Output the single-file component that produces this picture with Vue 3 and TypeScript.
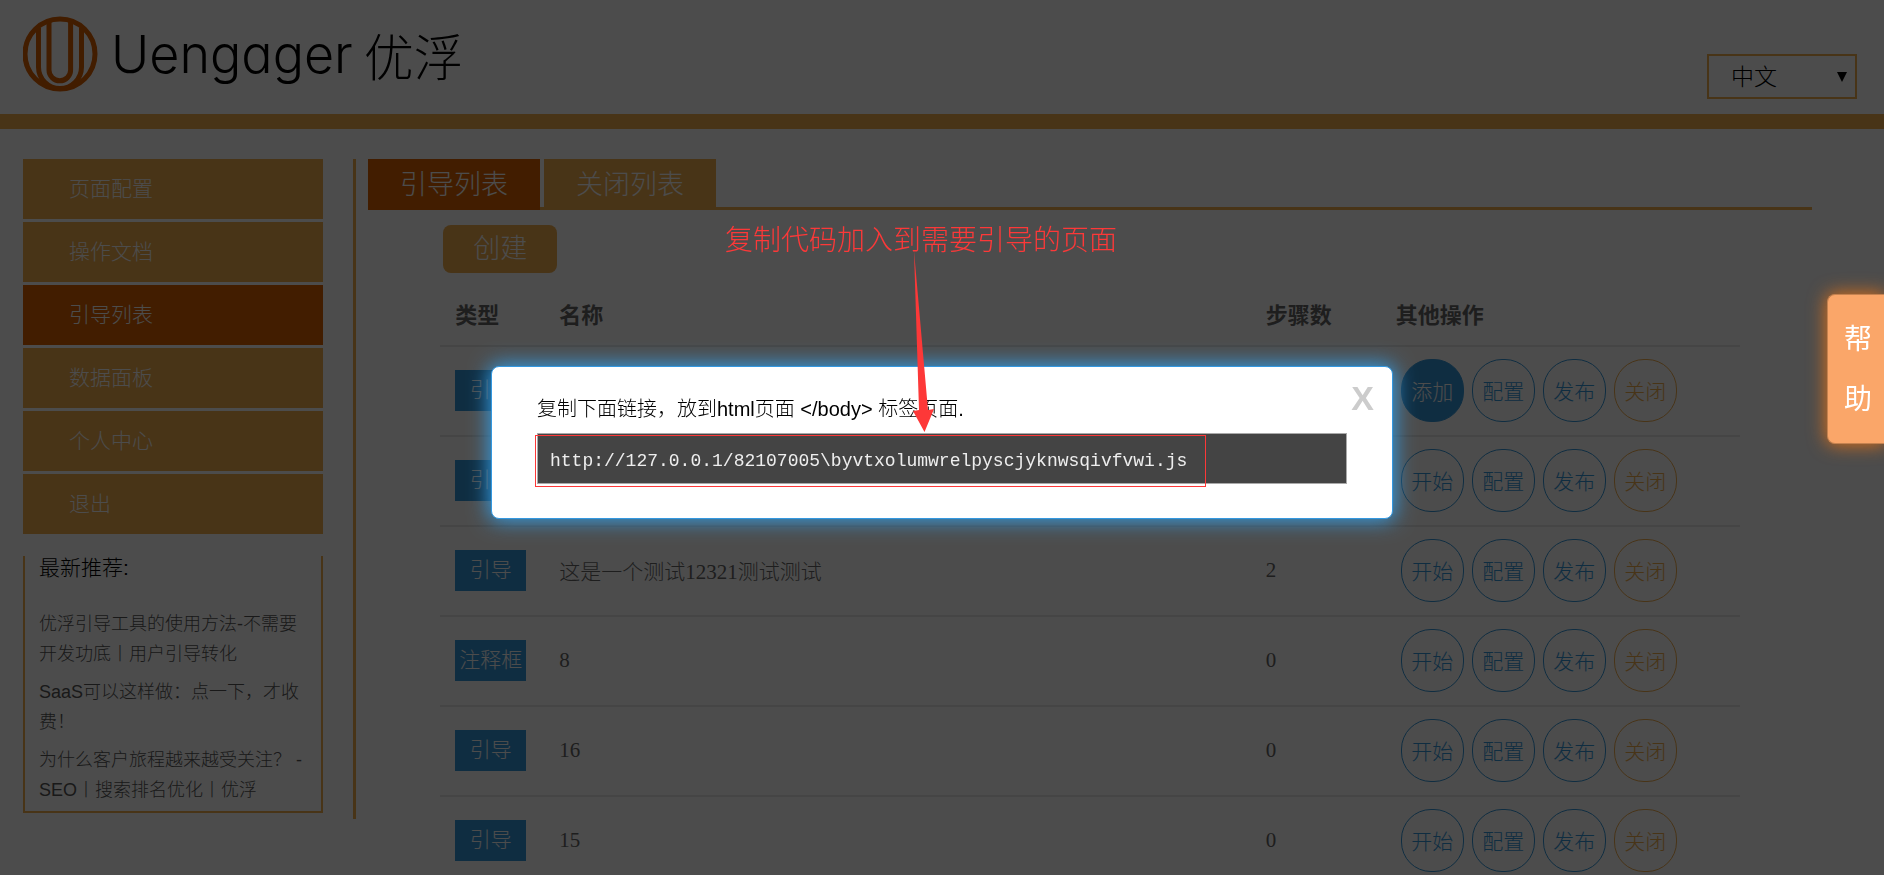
<script setup lang="ts">
import { ref } from 'vue'

interface GuideRow {
  type: string
  name: string
  steps: number
  started: boolean
}

const menu: string[] = ['页面配置', '操作文档', '引导列表', '数据面板', '个人中心', '退出']
const activeMenu = ref('引导列表')

const tabs: string[] = ['引导列表', '关闭列表']
const activeTab = ref('引导列表')

const articles: string[] = [
  '优浮引导工具的使用方法-不需要开发功底丨用户引导转化',
  'SaaS可以这样做：点一下，才收费！',
  '为什么客户旅程越来越受关注？ -SEO丨搜索排名优化丨优浮',
]

const rows: GuideRow[] = [
  { type: '引导', name: '', steps: 0, started: true },
  { type: '引导', name: '', steps: 0, started: false },
  { type: '引导', name: '这是一个测试12321测试测试', steps: 2, started: false },
  { type: '注释框', name: '8', steps: 0, started: false },
  { type: '引导', name: '16', steps: 0, started: false },
  { type: '引导', name: '15', steps: 0, started: false },
]

const language = ref('zh')
const dialogOpen = ref(true)
const snippet = ref('http://127.0.0.1/82107005\\byvtxolumwrelpyscjyknwsqivfvwi.js')
</script>

<template>
  <div class="page">
    <header class="header">
      <a class="logo" href="#" aria-label="Uengager 优浮">
        <svg class="mark" viewBox="1 0 76 76" aria-hidden="true">
          <circle cx="38" cy="38" r="35" />
          <path d="M16.5 12V51a21.5 21.5 0 0 0 43 0V12" />
          <path d="M27 6V54a10.800 10.800 0 0 0 21.600 0V6" />
        </svg>
        <span class="brand">Uengager</span>
        <span class="brand-cn">优浮</span>
      </a>
      <label class="language">
        <select v-model="language" aria-label="语言">
          <option value="zh">中文</option>
        </select>
        <svg viewBox="0 0 10 10" aria-hidden="true"><path d="M0 0H10L5 10Z" /></svg>
      </label>
    </header>

    <div class="body">
      <aside class="sidebar">
        <nav class="menu">
          <a
            v-for="item in menu"
            :key="item"
            href="#"
            :class="{ active: item === activeMenu }"
            @click.prevent="activeMenu = item"
          >{{ item }}</a>
        </nav>
        <section class="news">
          <h2>最新推荐:</h2>
          <ul>
            <li v-for="a in articles" :key="a"><a href="#">{{ a }}</a></li>
          </ul>
        </section>
      </aside>

      <main class="content">
        <div class="tabs">
          <button
            v-for="t in tabs"
            :key="t"
            type="button"
            :class="{ active: t === activeTab }"
            @click="activeTab = t"
          >{{ t }}</button>
        </div>
        <div class="panel">
          <button type="button" class="create">创建</button>
          <table>
            <colgroup>
              <col class="c-type" />
              <col />
              <col class="c-steps" />
              <col class="c-ops" />
            </colgroup>
            <thead>
              <tr>
                <th>类型</th>
                <th>名称</th>
                <th>步骤数</th>
                <th>其他操作</th>
              </tr>
            </thead>
            <tbody>
              <tr v-for="(row, i) in rows" :key="i">
                <td><span class="badge">{{ row.type }}</span></td>
                <td>{{ row.name }}</td>
                <td>{{ row.steps }}</td>
                <td>
                  <div class="ops">
                    <button type="button" :class="{ filled: row.started }">{{ row.started ? '添加' : '开始' }}</button>
                    <button type="button">配置</button>
                    <button type="button">发布</button>
                    <button type="button" class="close-op">关闭</button>
                  </div>
                </td>
              </tr>
            </tbody>
          </table>
        </div>
      </main>
    </div>

    <div v-if="dialogOpen" class="overlay">
      <div class="dialog" role="dialog" aria-modal="true">
        <label class="hint" for="snippet">复制下面链接，放到html页面 &lt;/body&gt; 标签页面.</label>
        <div class="field">
          <input id="snippet" v-model="snippet" type="text" readonly />
          <div class="frame"></div>
        </div>
        <button type="button" class="dismiss" aria-label="关闭" @click="dialogOpen = false">X</button>
        <p class="note">复制代码加入到需要引导的页面</p>
        <svg class="arrow" viewBox="0 0 24 182" aria-hidden="true">
          <path d="M3 0L17 159L23 158L13.500 181L2 160L8 159Z" />
        </svg>
      </div>
    </div>

    <button type="button" class="help"><span>帮</span><span>助</span></button>
  </div>
</template>

<style>
body {
  margin: 0;
  overflow: hidden;
}
</style>

<style scoped>
.page {
  --amber: #f0ad4e;
  --rust: #dc6100;
  --blue: #3498db;
  position: relative;
  box-sizing: border-box;
  height: 100vh;
  overflow: hidden;
  background: #fff;
  color: #000;
  font-family: "Liberation Serif", "Noto Sans CJK SC", serif;
  font-size: 21px;
  font-weight: 300;
}

button,
select,
input {
  font: inherit;
}

a {
  color: inherit;
  text-decoration: none;
}

.header {
  display: flex;
  justify-content: space-between;
  align-items: flex-start;
  box-sizing: border-box;
  height: 129px;
  padding: 16px 27px 0 23px;
  border-bottom: 15px solid var(--amber);
}

.logo {
  display: flex;
  align-items: center;
  height: 76px;
}

.mark {
  width: 76px;
  height: 76px;
  fill: none;
  stroke: var(--rust);
  stroke-width: 5;
}

.brand {
  margin-left: 12px;
  font-family: Inter, "Liberation Sans", sans-serif;
  font-size: 52px;
  font-weight: 350;
  font-feature-settings: "cv11";
}

.brand-cn {
  margin-left: 11px;
  font-family: "Noto Sans CJK SC", sans-serif;
  font-size: 50px;
  line-height: 74px;
}

.language {
  position: relative;
  margin-top: 38px;
}

.language select {
  display: block;
  box-sizing: border-box;
  width: 150px;
  height: 45px;
  padding: 2px 22px 0;
  border: 2px solid var(--amber);
  border-radius: 0;
  background: transparent;
  color: #000;
  font-size: 23px;
  appearance: none;
}

.language svg {
  position: absolute;
  top: 18px;
  right: 10px;
  width: 10px;
  height: 10px;
}

.body {
  display: flex;
  align-items: flex-start;
  padding: 30px 72px 0 23px;
}

.sidebar {
  flex: none;
  width: 300px;
  margin-right: 30px;
}

.menu {
  display: flex;
  flex-direction: column;
  gap: 3px;
}

.menu a {
  padding-left: 46px;
  background: var(--amber);
  color: #fff;
  line-height: 60px;
}

.menu a.active,
.tabs button.active {
  background: var(--rust);
}

.news {
  margin-top: 22px;
  padding: 0 13px 6px 14px;
  border: 2px solid var(--amber);
  border-top: 0;
  font-family: "Liberation Sans", "Noto Sans CJK SC", sans-serif;
}

.news h2 {
  margin: 0 0 30px;
  font-size: 21px;
  font-weight: 300;
  line-height: 23px;
}

.news ul {
  display: flex;
  flex-direction: column;
  gap: 8px;
  margin: 0;
  padding: 0;
  list-style: none;
}

.news li {
  color: #555;
  font-size: 18px;
  line-height: 30px;
}

.content {
  flex: 1;
  min-width: 0;
  border-left: 3px solid var(--amber);
  padding-left: 12px;
  height: 660px;
}

.tabs {
  display: flex;
  gap: 4px;
  border-bottom: 3px solid var(--amber);
}

.tabs button {
  box-sizing: border-box;
  height: 51px;
  margin-bottom: -3px;
  padding: 2px 32px 0;
  border: 0;
  background: var(--amber);
  color: #fff;
  font-size: 27px;
  line-height: 49px;
}

.panel {
  padding: 15px 5% 0;
}

.create {
  display: block;
  width: 114px;
  height: 48px;
  margin-left: 3px;
  padding: 0;
  border: 0;
  border-radius: 8px;
  background: var(--amber);
  color: #fff;
  font-size: 27px;
  line-height: 48px;
}

table {
  width: 100%;
  margin-top: 10px;
  border-collapse: separate;
  border-spacing: 0;
  table-layout: fixed;
}

.c-type {
  width: 104px;
}

.c-steps {
  width: 130px;
}

.c-ops {
  width: 359px;
}

th,
td {
  box-sizing: border-box;
  height: 90px;
  padding: 0 15px 2px;
  border-bottom: 2px solid #e8e8e8;
  color: #666;
  text-align: left;
  vertical-align: middle;
}

th {
  height: 64px;
  font-size: 22px;
  font-weight: 700;
}

.badge {
  display: block;
  width: 71px;
  background: var(--blue);
  color: #fff;
  line-height: 41px;
  text-align: center;
  white-space: nowrap;
}

.ops {
  display: flex;
  gap: 8px;
  padding-left: 5px;
}

.ops button {
  box-sizing: border-box;
  width: 63px;
  height: 63px;
  padding: 0;
  border: 1px solid var(--blue);
  border-radius: 30px;
  background: transparent;
  color: var(--blue);
}

.ops .filled {
  background: var(--blue);
  color: #fff;
}

.ops .close-op {
  border-color: var(--amber);
  color: var(--amber);
}

.overlay {
  position: fixed;
  inset: 0;
  display: flex;
  justify-content: center;
  align-items: flex-start;
  padding-top: 366px;
  background: rgba(0, 0, 0, 0.7);
}

.dialog {
  position: relative;
  box-sizing: border-box;
  width: 902px;
  padding: 28px 45px 34px;
  border: 1px solid #3498e0;
  border-radius: 8px;
  background: #fff;
  box-shadow: 0 0 20px 2px #359de3;
  font-family: "Liberation Sans", "Noto Sans CJK SC", sans-serif;
}

.hint {
  display: block;
  height: 38px;
  font-size: 20px;
  line-height: 29px;
}

.field {
  position: relative;
}

.field input {
  display: block;
  box-sizing: border-box;
  width: 100%;
  height: 51px;
  padding: 4px 12px 0;
  border: 1px solid #a9a9a9;
  border-radius: 0;
  outline: 0;
  background: #444;
  color: #eee;
  font-family: "Liberation Mono", monospace;
  font-size: 18px;
}

.frame {
  position: absolute;
  top: 2px;
  left: -2px;
  box-sizing: border-box;
  width: 671px;
  height: 52px;
  border: 1px solid #fd3838;
  pointer-events: none;
}

.dismiss {
  position: absolute;
  top: 11px;
  right: 18px;
  padding: 0;
  border: 0;
  background: none;
  color: #ccc;
  font-size: 34px;
  font-weight: 700;
  line-height: 40px;
}

.note {
  position: absolute;
  top: -146px;
  left: 233px;
  margin: 0;
  color: #fd3838;
  font-size: 28px;
  line-height: 40px;
  white-space: nowrap;
}

.arrow {
  position: absolute;
  top: -116px;
  left: 419px;
  width: 24px;
  height: 182px;
  fill: #fd3838;
}

.help {
  position: absolute;
  top: 294px;
  right: 0;
  display: flex;
  flex-direction: column;
  justify-content: center;
  align-items: center;
  width: 57px;
  height: 150px;
  padding: 2px 0 0 4px;
  border: 1px solid #c48250;
  border-right: 0;
  border-radius: 8px 0 0 8px;
  background: #faa669;
  box-shadow: 0 0 18px 1px #d8701c;
  color: #fff;
  font-size: 28px;
  font-weight: 400;
  line-height: 60px;
}
</style>
